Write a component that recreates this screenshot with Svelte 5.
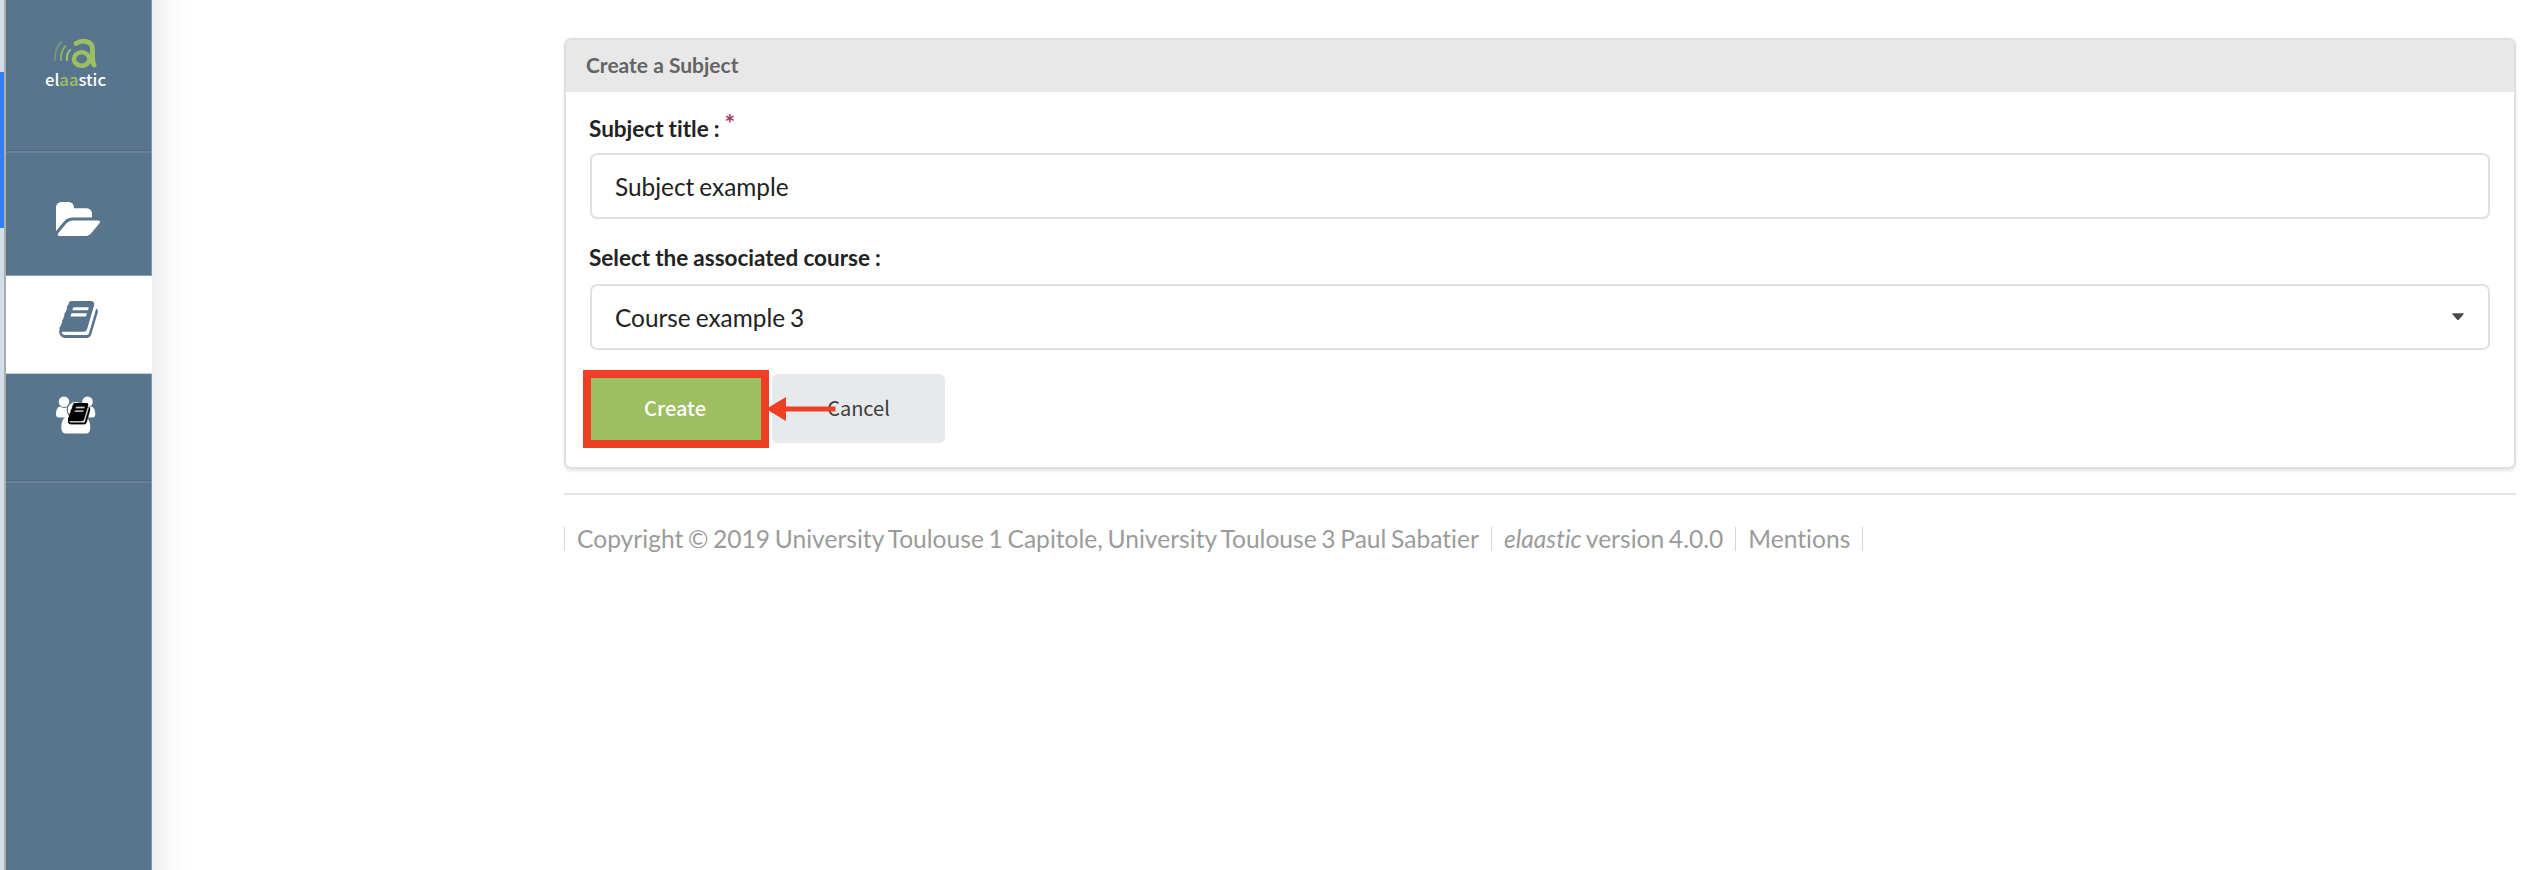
<script>
  const book =
    'M1703 478q40 57 18 129l-275 906q-19 64-76.5 107.5t-122.5 43.5h-923q-77 0-148.500-53.500t-99.500-131.500q-24-67-2-127 0-4 3-27t4-37q1-8-3-21.500t-3-19.500q2-11 8-21t16.500-23.500 16.500-23.500q23-38 45-91.500t30-91.500q3-10 .5-30t-.5-28q3-11 17-28t17-23q21-36 42-92t25-90q1-9-2.500-32t.5-28q4-13 22-30.500t22-22.500q19-26 42.500-84.500t27.500-96.500q1-8-3-25.500t-2-26.500q2-8 9-18t18-23 17-21q8-12 16.500-30.500t15-35 16-36 19.500-32 26.500-23.500 36-11.500 47.500 5.500l-1 3q38-9 51-9h761q74 0 114 56t18 130l-274 906q-36 119-71.500 153.500t-128.500 34.500h-869q-27 0-38 15-11 16-1 43 24 70 144 70h923q29 0 56-15.500t35-41.500l300-987q7-22 5-57 38 15 59 43zm-1064 2q-4 13 2 22.500t20 9.500h608q13 0 25.500-9.500t16.500-22.500l21-64q4-13-2-22.500t-20-9.500h-608q-13 0-25.500 9.500t-16.500 22.500zm-83 256q-4 13 2 22.500t20 9.500h608q13 0 25.500-9.500t16.500-22.500l21-64q4-13-2-22.500t-20-9.500h-608q-13 0-25.500 9.500t-16.500 22.500z';
  const folder =
    'M1879 952q0 31-31 66l-336 396q-43 51-120.500 86.500t-143.500 35.500h-1088q-34 0-60.500-13t-26.500-43q0-31 31-66l336-396q43-51 120.500-86.500t143.500-35.500h1088q34 0 60.500 13t26.500 43zm-343-344v160h-832q-94 0-197 47.500t-164 119.500l-337 396-5 6q0-4-.5-12.500t-.5-12.500v-960q0-92 66-158t158-66h320q92 0 158 66t66 158v32h544q92 0 158 66t66 158z';
</script>

<div class="page">
  <div class="edge"><div class="thumb"></div></div>
  <nav>
    <div class="item brand">
      <svg width="64" height="54" viewBox="43 36 64 54">
        <g fill="none" stroke="#9dbf62" stroke-linecap="round">
          <path d="M61.500 42Q54.500 48 55 60" stroke-width="2" opacity=".45" />
          <path d="M65.500 46Q60.500 51 61 60" stroke-width="2" opacity=".75" />
          <path d="M70 50Q66.500 53 67 60" stroke-width="2.200" />
          <path d="M76 43.500C82 39.500 92.500 40.500 92.500 49V56Q92.500 62 94 65" stroke-width="4.800" />
          <ellipse cx="81.700" cy="59" rx="7.700" ry="6.700" stroke-width="4.500" />
        </g>
        <text x="45" y="85.500" textLength="61" lengthAdjust="spacingAndGlyphs">el<tspan>aa</tspan>stic</text>
      </svg>
    </div>
    <div class="item courses">
      <svg width="44" height="34" viewBox="0 128 1879 1408" preserveAspectRatio="none"><path d={folder} fill="#fff" /></svg>
    </div>
    <div class="item subjects">
      <svg width="39" height="37" viewBox="58 128 1674 1536" preserveAspectRatio="none"><path d={book} fill="#58758d" /></svg>
    </div>
    <div class="item groups">
      <svg width="40" height="38" viewBox="56 396 40 38">
        <g fill="#fff">
          <circle cx="64" cy="401.700" r="5.300" />
          <circle cx="87.500" cy="401.700" r="5.300" />
          <path d="M59.500 406.500Q64 409 67.500 407Q67 413 70 417.500H59Q56 417.500 56 414Q56 408 59.500 406.500Z" />
          <path d="M91.500 406.500Q87 409 83.500 407Q84 413 81 417.500H92Q95.300 417.500 95.300 414Q95.300 408 91.500 406.500Z" />
          <path d="M67 416Q75.700 422 84 416Q90.300 418 90.300 428Q90.300 433.500 85.500 433.500H66.500Q61.300 433.500 61.300 428Q61.300 418 67 416Z" />
        </g>
        <circle cx="75.700" cy="409.800" r="8.500" fill="#fff" stroke="#58758d" stroke-width="1.200" />
        <svg x="67.700" y="403" width="22.600" height="21.500" viewBox="58 128 1674 1536" preserveAspectRatio="none">
          <path d="M600 300H1400V800H450ZM250 1400H1250L1550 500L1650 600L1350 1560H250Z" fill="#dfe3e6" />
          <path d={book} fill="#000" stroke="#000" stroke-width="30" />
        </svg>
      </svg>
    </div>
  </nav>
  <div class="shade"></div>
  <main>
    <section class="card">
      <header><span>Create a Subject</span></header>
      <form>
        <label for="title">Subject title :<sup>*</sup></label>
        <div class="field" id="title"><span>Subject example</span></div>
        <label for="course" class="second">Select the associated course :</label>
        <div class="field" id="course">
          <span>Course example 3</span>
          <svg width="12" height="8" viewBox="0 0 12 8"><path d="M.8 .3H11.200Q12.300 .6 11.400 1.500L7 6.500Q6 7.500 5 6.500L.6 1.500Q-.3.600 .8 .3Z" fill="#4c4c4c" /></svg>
        </div>
        <div class="actions">
          <button type="button" class="create">Create</button>
          <button type="button" class="cancel">Cancel</button>
          <div class="frame"></div>
          <svg class="arrow" width="70" height="24" viewBox="0 0 70 24"><path d="M0 12L20 0V9.500H69.500V14.500H20V24Z" fill="#ed4025" /></svg>
        </div>
      </form>
    </section>
    <footer>
      <span>Copyright © 2019 University Toulouse 1 Capitole, University Toulouse 3 Paul Sabatier</span>
      <span><i>elaastic</i> version 4.0.0</span>
      <span>Mentions</span>
    </footer>
  </main>
</div>

<style>
  :global(body) { background: #fff; }
  .page { display: flex; width: 2522px; height: 870px; overflow: hidden; font-family: Lato, sans-serif; font-variant-ligatures: none; color: #222; }
  .page * { box-sizing: border-box; }
  svg { display: block; flex: none; }
  .edge { width: 6px; border-right: 2px solid #adadad; background: #d1dfea; padding-top: 72px; }
  .thumb { height: 156px; background: #2f80f5; }
  nav { width: 146px; background: #58758d; border-right: 1px solid #8398a9; }
  .item { display: flex; align-items: flex-start; }
  .brand { height: 153px; padding: 36px 0 0 37px; border-bottom: 2px solid #68849a; box-shadow: inset 0 -1px #4f6a80; }
  .brand text { font: 500 16px "Noto Sans CJK SC", sans-serif; fill: #fff; }
  .brand tspan { fill: #9dbf62; }
  .courses { height: 123px; padding: 49px 0 0 50px; border-bottom: 1px solid #8ba0b1; }
  .subjects { height: 98px; margin-right: -1px; padding: 25px 0 0 53px; background: #fff; border-bottom: 1px solid #c9d3da; }
  .groups { height: 109px; padding: 22px 0 0 50px; border-bottom: 2px solid #68849a; box-shadow: inset 0 -1px #4f6a80; }
  .shade { width: 40px; background: linear-gradient(90deg, #efefef, #f7f7f7 35%, #fcfcfc 65%, #fff); }
  main { margin-left: 372px; width: 1952px; padding-top: 38px; }
  .card { height: 431px; border: 2px solid #dfdfdf; border-radius: 7px; box-shadow: 0 2px 3px rgba(0, 0, 0, .1); }
  header { height: 52px; padding: 12px 0 0 20px; background: #e8e8e8; border-radius: 5px 5px 0 0; }
  header span { display: block; font-size: 21px; font-weight: 700; color: #646464; line-height: 26px; }
  form { padding: 23px 24px 0; }
  label { display: flex; height: 38px; margin-left: -1px; line-height: 28px; font-size: 22.500px; font-weight: 700; color: #222; word-spacing: -.4px; }
  label.second { margin-top: 26px; height: 40px; }
  sup { margin-left: 5px; font-size: 25px; line-height: 17px; color: #a5355d; font-weight: 700; }
  .field { display: flex; align-items: center; justify-content: space-between; height: 66px; border: 2px solid #e0e0e0; border-radius: 7px; padding: 0 24px 0 23px; font-size: 24.400px; word-spacing: -1.300px; color: #222; }
  label.second { margin-top: 25px; }
  .actions { position: relative; display: flex; gap: 8px; margin-top: 24px; }
  button { height: 69px; border: 0; border-radius: 6px; padding: 0 0 2px; font: 400 20px "Noto Sans CJK SC", sans-serif; }
  .create { width: 174px; padding-right: 4px; background: #9dbf62; color: #fff; font-weight: 500; }
  .cancel { width: 173px; background: #e6eaed; color: #3c3c3c; }
  .frame { position: absolute; left: -7px; top: -4px; width: 186px; height: 78px; border: 8px solid #ed4025; }
  .arrow { position: absolute; left: 176px; top: 23px; }
  footer { display: flex; margin-top: 24px; padding-top: 32px; border-top: 2px solid #e3e3e3; font-size: 24.600px; word-spacing: -1.650px; line-height: 24px; color: #9b9b9b; white-space: nowrap; }
  footer span { height: 24px; padding: 0 12px; border-left: 1px solid #d6d6d6; }
  footer span:last-child { border-right: 1px solid #d6d6d6; }
</style>
